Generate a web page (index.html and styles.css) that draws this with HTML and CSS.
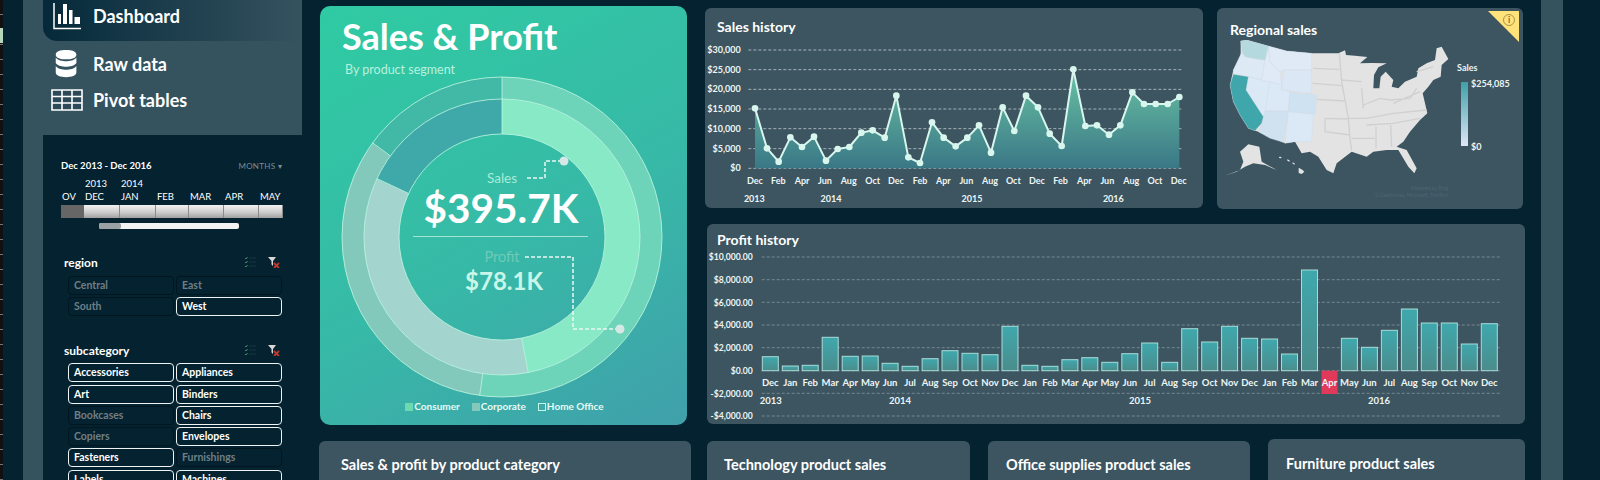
FILE: index.html
```html
<!DOCTYPE html>
<html lang="en">
<head>
  <meta charset="UTF-8" />
  <title>Sales &amp; Profit Dashboard</title>
  <link rel="stylesheet" href="styles.css">
</head>
<body>
  <div class="sheet-edge"><div class="sheet-cell"></div></div>

  <aside class="sidebar">
    <nav class="nav">
      <a class="nav-item active">
        <svg class="nav-icon" viewBox="0 0 36 30"><path class="ico-line" d="M6 2V27.5H33"/><path class="ico-fill" d="M10 13h3v10h-3zM15 3h4v20h-4zM21 9h3.5v14H21zM26.5 16H32v7h-5.5z"/></svg>
        <span>Dashboard</span>
      </a>
      <a class="nav-item">
        <svg class="nav-icon" viewBox="0 0 36 32"><path class="ico-fill" d="M6 6c0-3.5 5-5 11-5s11 1.5 11 5-5 5-11 5-11-1.5-11-5zM6 9c2 3 7 4 11 4s9-1 11-4v6c-2 3-7 4-11 4s-9-1-11-4zM6 18c2 3 7 4 11 4s9-1 11-4v7c0 3-5 5-11 5s-11-2-11-5z"/></svg>
        <span>Raw data</span>
      </a>
      <a class="nav-item">
        <svg class="nav-icon" viewBox="0 0 36 24"><path class="ico-grid" d="M3 2h30v20H3zM3 8.5h30M3 15h30M13 2v20M23 2v20"/></svg>
        <span>Pivot tables</span>
      </a>
    </nav>

    <section class="filters">
      <div class="date-row">
        <span>Dec 2013 - Dec 2016</span>
        <span class="months">MONTHS &#9662;</span>
      </div>
      <div class="tl-row tl-years">
        <span class="s1"></span><span class="s2">2013</span><span class="s3">2014</span>
      </div>
      <div class="tl-row tl-labels">
        <span class="s1 clip">OV</span><span class="s2">DEC</span><span class="s3">JAN</span><span class="s4">FEB</span><span class="s5">MAR</span><span class="s6">APR</span><span class="s7">MAY</span>
      </div>
      <div class="tl-row tl-bar">
        <span class="s1 off"></span><span class="s2"></span><span class="s3"></span><span class="s4"></span><span class="s5"></span><span class="s6"></span><span class="s7"></span>
      </div>
      <div class="tl-scroll"><div class="tl-thumb"></div></div>

      <div class="slicer-head region-head">
        <span>region</span>
        <span class="slicer-tools">
          <svg viewBox="0 0 12 12" class="tool"><path class="tool-check" d="M1 2l1 1 1.5-2M1 6l1 1 1.5-2M1 10l1 1 1.5-2"/><path class="tool-rows" d="M5 2h7M5 6h7M5 10h7"/></svg>
          <svg viewBox="0 0 12 12" class="tool"><path class="tool-funnel" d="M0 1h8L5 5v5L3.5 8.5V5z"/><path class="tool-x" d="M6 7l5 5M11 7l-5 5"/></svg>
        </span>
      </div>
      <div class="slicer">
        <div class="chip">Central</div><div class="chip">East</div>
        <div class="chip">South</div><div class="chip on">West</div>
      </div>

      <div class="slicer-head sub-head">
        <span>subcategory</span>
        <span class="slicer-tools">
          <svg viewBox="0 0 12 12" class="tool"><path class="tool-check" d="M1 2l1 1 1.5-2M1 6l1 1 1.5-2M1 10l1 1 1.5-2"/><path class="tool-rows" d="M5 2h7M5 6h7M5 10h7"/></svg>
          <svg viewBox="0 0 12 12" class="tool"><path class="tool-funnel" d="M0 1h8L5 5v5L3.5 8.5V5z"/><path class="tool-x" d="M6 7l5 5M11 7l-5 5"/></svg>
        </span>
      </div>
      <div class="slicer">
        <div class="chip on">Accessories</div><div class="chip on">Appliances</div>
        <div class="chip on">Art</div><div class="chip on">Binders</div>
        <div class="chip">Bookcases</div><div class="chip on">Chairs</div>
        <div class="chip">Copiers</div><div class="chip on">Envelopes</div>
        <div class="chip on">Fasteners</div><div class="chip">Furnishings</div>
        <div class="chip on">Labels</div><div class="chip on">Machines</div>
      </div>
    </section>
  </aside>

  <main class="main">
    <div class="top">
      <section class="hero">
        <h1>Sales &amp; Profit</h1>
        <p class="hero-sub">By product segment</p>
        <svg class="donut" viewBox="320 76 367 322">
          <circle class="seg" cx="502" cy="237" r="149" stroke="#6dd3b9" stroke-dasharray="188 360" pathLength="360" transform="rotate(-90 502 237)"/>
          <circle class="seg" cx="502" cy="237" r="149" stroke="#83c9bb" stroke-dasharray="118 360" stroke-dashoffset="-188" pathLength="360" transform="rotate(-90 502 237)"/>
          <circle class="seg" cx="502" cy="237" r="149" stroke="#42b8a6" stroke-dasharray="54 360" stroke-dashoffset="-306" pathLength="360" transform="rotate(-90 502 237)"/>
          <circle class="seg wide" cx="502" cy="237" r="120.5" stroke="#87e9c5" stroke-dasharray="169 360" pathLength="360" transform="rotate(-90 502 237)"/>
          <circle class="seg wide" cx="502" cy="237" r="120.5" stroke="#a4d4ce" stroke-dasharray="126 360" stroke-dashoffset="-169" pathLength="360" transform="rotate(-90 502 237)"/>
          <circle class="seg wide" cx="502" cy="237" r="120.5" stroke="#3fa9aa" stroke-dasharray="65 360" stroke-dashoffset="-295" pathLength="360" transform="rotate(-90 502 237)"/>
          <circle class="ring" cx="502" cy="237" r="160"/>
          <circle class="ring" cx="502" cy="237" r="138"/>
          <circle class="ring" cx="502" cy="237" r="103"/>
          <path class="ring" d="M502 77V134M521.7 338.1L528.3 372.5M482.8 373.6L479.7 395.4M408.7 193.5L377 178.6M390.4 155.9L372.6 142.9"/>
          <path class="lead" d="M527 178H545V161H562"/>
          <path class="lead" d="M525 257H573V329H618"/>
          <circle class="dot" cx="564" cy="161" r="4.5"/>
          <circle class="dot" cx="620" cy="329" r="4.5"/>
          <text class="d-sales" x="502" y="183">Sales</text>
          <text class="d-big" x="501" y="223">$395.7K</text>
          <path class="d-rule" d="M413 236.5H588"/>
          <text class="d-profit" x="502" y="262">Profit</text>
          <text class="d-mid" x="504" y="290">$78.1K</text>
        </svg>
        <div class="hero-legend">
          <span><i class="key k1"></i>Consumer</span>
          <span><i class="key k2"></i>Corporate</span>
          <span><i class="key k3"></i>Home Office</span>
        </div>
      </section>

      <div class="right">
        <div class="right-top">
          <section class="card sales-card">
            <h3>Sales history</h3>
            <svg class="chart" viewBox="15 120 1494 504" width="498" height="168">
              <defs>
                <linearGradient id="areaFill" x1="0" y1="0" x2="0" y2="1">
                  <stop offset="0" stop-color="#69c3a4"/>
                  <stop offset="1" stop-color="#3a7786"/>
                </linearGradient>
              </defs>
              <g class="grid-s">
                <path d="M145 150H1450M145 209H1450M145 268H1450M145 327H1450M145 386H1450M145 446H1450M145 505H1450"/>
              </g>
              <path fill="url(#areaFill)" d="M165 325L201 445 236 485 271 412 306 441 342 410 378 482 413 447 448 441 484 398 518 391 554 413 589 287 625 472 660 489 696 367 731 413 767 439 802 413 837 376 873 458 908 322 943 393 978 287 1014 322 1049 401 1085 438 1120 208 1156 378 1191 376 1227 404 1261 376 1297 277 1332 312 1367 312 1403 312 1438 291V505H165Z"/>
              <polyline class="s-line" points="165,325 201,445 236,485 271,412 306,441 342,410 378,482 413,447 448,441 484,398 518,391 554,413 589,287 625,472 660,489 696,367 731,413 767,439 802,413 837,376 873,458 908,322 943,393 978,287 1014,322 1049,401 1085,438 1120,208 1156,378 1191,376 1227,404 1261,376 1297,277 1332,312 1367,312 1403,312 1438,291"/>
              <g class="s-dots">
                <circle cx="165" cy="325" r="10"/><circle cx="201" cy="445" r="10"/><circle cx="236" cy="485" r="10"/><circle cx="271" cy="412" r="10"/><circle cx="306" cy="441" r="10"/><circle cx="342" cy="410" r="10"/><circle cx="378" cy="482" r="10"/><circle cx="413" cy="447" r="10"/><circle cx="448" cy="441" r="10"/><circle cx="484" cy="398" r="10"/><circle cx="518" cy="391" r="10"/><circle cx="554" cy="413" r="10"/><circle cx="589" cy="287" r="10"/><circle cx="625" cy="472" r="10"/><circle cx="660" cy="489" r="10"/><circle cx="696" cy="367" r="10"/><circle cx="731" cy="413" r="10"/><circle cx="767" cy="439" r="10"/><circle cx="802" cy="413" r="10"/><circle cx="837" cy="376" r="10"/><circle cx="873" cy="458" r="10"/><circle cx="908" cy="322" r="10"/><circle cx="943" cy="393" r="10"/><circle cx="978" cy="287" r="10"/><circle cx="1014" cy="322" r="10"/><circle cx="1049" cy="401" r="10"/><circle cx="1085" cy="438" r="10"/><circle cx="1120" cy="208" r="10"/><circle cx="1156" cy="378" r="10"/><circle cx="1191" cy="376" r="10"/><circle cx="1227" cy="404" r="10"/><circle cx="1261" cy="376" r="10"/><circle cx="1297" cy="277" r="10"/><circle cx="1332" cy="312" r="10"/><circle cx="1367" cy="312" r="10"/><circle cx="1403" cy="312" r="10"/><circle cx="1438" cy="291" r="10"/>
              </g>
              <g class="s-text end">
                <text x="122" y="159">$30,000</text><text x="122" y="218">$25,000</text><text x="122" y="277">$20,000</text><text x="122" y="336">$15,000</text><text x="122" y="395">$10,000</text><text x="122" y="455">$5,000</text><text x="122" y="514">$0</text>
              </g>
              <g class="s-text mid">
                <text x="165" y="552">Dec</text><text x="235" y="552">Feb</text><text x="306" y="552">Apr</text><text x="375" y="552">Jun</text><text x="446" y="552">Aug</text><text x="518" y="552">Oct</text><text x="588" y="552">Dec</text><text x="660" y="552">Feb</text><text x="730" y="552">Apr</text><text x="799" y="552">Jun</text><text x="870" y="552">Aug</text><text x="940" y="552">Oct</text><text x="1011" y="552">Dec</text><text x="1082" y="552">Feb</text><text x="1153" y="552">Apr</text><text x="1222" y="552">Jun</text><text x="1294" y="552">Aug</text><text x="1365" y="552">Oct</text><text x="1436" y="552">Dec</text>
                <text x="163" y="607">2013</text><text x="393" y="607">2014</text><text x="816" y="607">2015</text><text x="1240" y="607">2016</text>
              </g>
            </svg>
          </section>

          <section class="card map-card">
            <h3>Regional sales</h3>
            <div class="info-flag"><span>i</span></div>
            <svg class="chart" viewBox="-9 15 918 507" width="306" height="169">
              <defs>
                <linearGradient id="legendFill" x1="0" y1="0" x2="0" y2="1">
                  <stop offset="0" stop-color="#3fa0a8"/>
                  <stop offset="1" stop-color="#dfe6f5"/>
                </linearGradient>
              </defs>
              <path class="land" d="M62 18L80 15 145 33 200 48 275 55 355 55 375 46 378 60 405 62 442 66 420 85 455 84 500 85 475 97 462 120 460 160 478 160 482 125 497 110 520 135 515 155 535 160 555 140 590 125 595 100 620 85 645 75 650 40 665 35 685 72 665 90 662 125 640 135 625 155 608 175 615 205 622 235 600 255 570 290 550 320 530 335 560 345 590 400 583 415 565 395 535 345 500 345 460 350 440 365 395 350 350 385 340 415 320 405 295 365 270 350 245 355 225 320 195 325 115 290 85 280 60 240 40 200 30 150 40 105 62 60Z"/>
              <path class="land" d="M85 328L118 335 125 380 170 405 135 390 100 385 75 395 50 410 15 422 60 405 70 380 60 350Z"/>
              <path class="land" d="M178 365l7 1-2 4-6-1zM203 373l7 4-3 3-6-4zM218 382l7 4-2 3-6-4zM236 398l11 6 6 6-8 7-9-3z"/>
              <path class="st-line" d="M280 100L358 103M278 145L365 152M290 193L375 198M315 250L385 252M358 55L365 140 375 195 385 250 390 310 395 345M315 250V290L390 300M365 135L425 140M425 160L430 220M385 250L440 250 520 235 620 225M440 270L520 265 600 250M468 275V340M512 270L515 335M395 310H465M520 205L600 170M430 210L480 190 510 195 570 190 590 160M590 110L640 95"/>
              <path class="st" fill="#dde9f5" d="M66 50L75 65 110 72 135 75 125 135 85 125 40 118 40 105Z"/>
              <path class="st" fill="#dbe8f6" d="M85 125L150 140 135 235 130 245 78 165Z"/>
              <path class="st" fill="#dfeaf6" d="M145 33L150 80 180 110 185 150 125 135 135 75Z"/>
              <path class="st" fill="#dfeaf6" d="M145 33L200 48 275 55 275 105 190 105 180 110 150 80Z"/>
              <path class="st" fill="#dbe7f5" d="M190 105L275 105 275 175 185 165Z"/>
              <path class="st" fill="#dbe8f6" d="M150 140L185 150 185 165 210 170 205 228 135 228Z"/>
              <path class="st" fill="#cfe2f1" d="M210 172L290 180 285 238 205 230Z"/>
              <path class="st" fill="#d0e1ef" d="M135 228L205 230 190 322 150 310 115 290 127 265 130 245Z"/>
              <path class="st" fill="#dbe8f6" d="M205 230L280 238 275 320 225 320 195 325Z"/>
              <path class="st" fill="#b4d9de" d="M62 18L80 15 145 33 135 75 110 72 75 65 66 50Z"/>
              <path class="st" fill="#3fa7ab" d="M40 118L85 125 78 165 130 245 125 265 105 287 85 280 60 240 40 200 30 150Z"/>
              <text class="s-text" x="711" y="108">Sales</text>
              <rect x="723" y="141" width="21" height="192" fill="url(#legendFill)"/>
              <text class="s-text lg" x="753" y="156">$254,085</text>
              <text class="s-text lg" x="753" y="345">$0</text>
              <text class="attrib" x="684" y="465">Powered by Bing</text>
              <text class="attrib" x="684" y="486">&#169; GeoNames, Microsoft, TomTom</text>
            </svg>
          </section>
        </div>

        <section class="card profit-card">
          <h3>Profit history</h3>
          <svg class="chart" viewBox="707 250 818 174" width="818" height="174">
            <defs>
              <linearGradient id="barFill" x1="0" y1="0" x2="0" y2="1">
                <stop offset="0" stop-color="#3fa8ad"/>
                <stop offset="1" stop-color="#4b8c8c"/>
              </linearGradient>
            </defs>
            <path class="grid-p" d="M761.7 257H1500M761.7 279.7H1500M761.7 302.3H1500M761.7 325H1500M761.7 347.7H1500M761.7 370.7H1500M761.7 393.3H1500M761.7 416H1500"/>
            <g class="bars">
              <rect x="762.3" y="356.7" width="16" height="14"/><rect x="782.3" y="366" width="16" height="4.7"/><rect x="802.2" y="365.3" width="16" height="5.4"/><rect x="822.2" y="337.3" width="16" height="33.4"/><rect x="842.2" y="356.3" width="16" height="14.4"/><rect x="862.2" y="356" width="16" height="14.7"/><rect x="882.1" y="363.3" width="16" height="7.4"/><rect x="902.1" y="366.3" width="16" height="4.4"/><rect x="922.1" y="358.7" width="16" height="12"/><rect x="942" y="350.7" width="16" height="20"/><rect x="962" y="353.3" width="16" height="17.4"/><rect x="982" y="354.7" width="16" height="16"/><rect x="1002" y="326.3" width="16" height="44.4"/><rect x="1021.9" y="365.3" width="16" height="5.4"/><rect x="1041.9" y="366.3" width="16" height="4.4"/><rect x="1061.9" y="359.7" width="16" height="11"/><rect x="1081.8" y="357.7" width="16" height="13"/><rect x="1101.8" y="362.3" width="16" height="8.4"/><rect x="1121.8" y="353.7" width="16" height="17"/><rect x="1141.7" y="343" width="16" height="27.7"/><rect x="1161.7" y="362.3" width="16" height="8.4"/><rect x="1181.7" y="328.7" width="16" height="42"/><rect x="1201.7" y="342" width="16" height="28.7"/><rect x="1221.6" y="326.3" width="16" height="44.4"/><rect x="1241.6" y="338.3" width="16" height="32.4"/><rect x="1261.6" y="339" width="16" height="31.7"/><rect x="1281.5" y="354" width="16" height="16.7"/><rect x="1301.5" y="270" width="16" height="100.7"/><rect x="1341.4" y="338.3" width="16" height="32.4"/><rect x="1361.4" y="347.3" width="16" height="23.4"/><rect x="1381.4" y="330.3" width="16" height="40.4"/><rect x="1401.4" y="309" width="16" height="61.7"/><rect x="1421.3" y="323" width="16" height="47.7"/><rect x="1441.3" y="323" width="16" height="47.7"/><rect x="1461.3" y="344" width="16" height="26.7"/><rect x="1481.3" y="323.7" width="16" height="47"/>
            </g>
            <rect class="neg" x="1321.5" y="370.7" width="16" height="23.3"/>
            <g class="p-text end yaxis">
              <text x="752.7" y="260">$10,000.00</text><text x="752.7" y="283">$8,000.00</text><text x="752.7" y="305.5">$6,000.00</text><text x="752.7" y="328">$4,000.00</text><text x="752.7" y="351">$2,000.00</text><text x="752.7" y="374">$0.00</text><text x="752.7" y="396.5">-$2,000.00</text><text x="752.7" y="419">-$4,000.00</text>
            </g>
            <g class="p-text mid">
              <text x="770.3" y="386">Dec</text><text x="790.3" y="386">Jan</text><text x="810.2" y="386">Feb</text><text x="830.2" y="386">Mar</text><text x="850.2" y="386">Apr</text><text x="870.2" y="386">May</text><text x="890.1" y="386">Jun</text><text x="910.1" y="386">Jul</text><text x="930.1" y="386">Aug</text><text x="950" y="386">Sep</text><text x="970" y="386">Oct</text><text x="990" y="386">Nov</text><text x="1010" y="386">Dec</text><text x="1029.9" y="386">Jan</text><text x="1049.9" y="386">Feb</text><text x="1069.9" y="386">Mar</text><text x="1089.8" y="386">Apr</text><text x="1109.8" y="386">May</text><text x="1129.8" y="386">Jun</text><text x="1149.7" y="386">Jul</text><text x="1169.7" y="386">Aug</text><text x="1189.7" y="386">Sep</text><text x="1209.7" y="386">Oct</text><text x="1229.6" y="386">Nov</text><text x="1249.6" y="386">Dec</text><text x="1269.6" y="386">Jan</text><text x="1289.5" y="386">Feb</text><text x="1309.5" y="386">Mar</text><text x="1329.5" y="386">Apr</text><text x="1349.4" y="386">May</text><text x="1369.4" y="386">Jun</text><text x="1389.4" y="386">Jul</text><text x="1409.4" y="386">Aug</text><text x="1429.3" y="386">Sep</text><text x="1449.3" y="386">Oct</text><text x="1469.3" y="386">Nov</text><text x="1489.3" y="386">Dec</text>
              <text x="770.7" y="404">2013</text><text x="900" y="404">2014</text><text x="1140" y="404">2015</text><text x="1379" y="404">2016</text>
            </g>
          </svg>
        </section>
      </div>
    </div>

    <div class="bottom">
      <section class="card b-category"><h3>Sales &amp; profit by product category</h3></section>
      <section class="card b-tech"><h3>Technology product sales</h3></section>
      <section class="card b-office"><h3>Office supplies product sales</h3></section>
      <section class="card b-furn"><h3>Furniture product sales</h3></section>
    </div>
  </main>

  <div class="side-strip"></div>
</body>
</html>
```

FILE: styles.css
```css
* {
  box-sizing: border-box;
}
html, body {
  height: 480px;
  overflow: hidden;
}
body {
  margin: 0;
  width: 1600px;
  display: flex;
  background: #04222f;
  color: white;
  font-family: "Lato", "Noto Sans", sans-serif;
}

/* spreadsheet sliver on the far left */
.sheet-edge {
  width: 3px;
  flex: none;
  background: repeating-linear-gradient(#111 0, #111 14px, #777 14px, #777 15px);
}
.sheet-cell {
  height: 15px;
  margin-top: 28px;
  background: #b5d6bb;
}

.sidebar {
  width: 279px;
  flex: none;
  margin-left: 20px;
  background: linear-gradient(#35525f 0, #35525f 135px, transparent 135px), linear-gradient(90deg, #35525f 20px, transparent 20px);
}
.nav {
  height: 135px;
}
.nav-item {
  display: flex;
  align-items: center;
  gap: 8px;
  height: 36px;
  padding-left: 26px;
  font-size: 18px;
  font-weight: 700;
}
.nav-item.active {
  height: 41px;
  margin-left: 20px;
  margin-bottom: 5px;
  padding-left: 5px;
  gap: 9px;
  padding-bottom: 10px;
  border-bottom-left-radius: 14px;
  background: linear-gradient(90deg, #05293a 0, #1b3c4b 45%, #35525f 100%);
}
.nav-icon {
  width: 36px;
  height: 30px;
  flex: none;
}
.ico-line {
  fill: none;
  stroke: white;
  stroke-width: 1.5;
}
.ico-fill {
  fill: white;
}
.ico-grid {
  fill: #2b4956;
  stroke: white;
  stroke-width: 1.6;
}

.filters {
  height: 345px;
  margin-left: 20px;
  padding: 24px 20px 0 18px;
  background: #04222f;
  border-top-left-radius: 8px;
  overflow: hidden;
  font-size: 9.5px;
  font-weight: 700;
}
.date-row {
  display: flex;
  justify-content: space-between;
  height: 16px;
  line-height: 14px;
}
.months {
  font-weight: 400;
  font-size: 8px;
  color: #7f8d93;
  letter-spacing: .3px;
}
.tl-row {
  display: flex;
}
.tl-row span {
  flex: none;
  padding-left: 1px;
}
.s1 { width: 23px; }
.s2 { width: 36px; }
.s3 { width: 36px; }
.s4 { width: 33px; }
.s5 { width: 35px; }
.s6 { width: 35px; }
.s7 { width: 24px; }
.tl-years {
  height: 16px;
  line-height: 17px;
  font-weight: 400;
}
.tl-labels {
  height: 14px;
  line-height: 12px;
  font-weight: 400;
}
.tl-bar {
  height: 13px;
}
.tl-bar span {
  border-right: 1px solid #8a8a8a;
  background: linear-gradient(#f2f2f2, #c9c9c9 60%, #a0a0a0);
}
.tl-bar .off {
  background: #666;
  border: 0;
}
.tl-scroll {
  width: 140px;
  height: 6px;
  margin: 5px 0 0 38px;
  background: #f3f3f3;
  border-radius: 2px;
}
.tl-thumb {
  width: 22px;
  height: 6px;
  background: #9aa0a3;
  border-radius: 2px;
}

.slicer-head {
  display: flex;
  justify-content: space-between;
  align-items: center;
  height: 18px;
  padding: 0 2px 0 3px;
  font-size: 12px;
}
.region-head {
  margin-top: 24px;
  margin-bottom: 5px;
}
.sub-head {
  margin-top: 25px;
  margin-bottom: 4px;
}
.slicer-tools {
  display: flex;
  gap: 12px;
}
.tool {
  width: 12px;
  height: 12px;
}
.tool-check {
  fill: none;
  stroke: #3e8f62;
  stroke-width: 1;
}
.tool-rows {
  fill: none;
  stroke: #12313d;
  stroke-width: 1.5;
}
.tool-funnel {
  fill: #d8d8d8;
}
.tool-x {
  fill: none;
  stroke: #c0392b;
  stroke-width: 1.8;
}
.slicer {
  display: grid;
  grid-template-columns: 106px 106px;
  gap: 2.3px 2px;
  margin-left: 7px;
}
.chip {
  height: 19px;
  padding-left: 5px;
  line-height: 16px;
  font-size: 10.5px;
  color: #6f7f86;
  border: 1.5px solid #02161f;
  border-radius: 4px;
}
.chip.on {
  color: white;
  border-color: #eef3f4;
}

.main {
  width: 1239px;
  flex: none;
}
.top {
  display: flex;
  padding-left: 18px;
}
.hero {
  width: 367px;
  height: 419px;
  margin-top: 6px;
  border-radius: 10px;
  background: linear-gradient(150deg, #2fcba3 0, #37b9a7 55%, #40a0ab 100%);
}
.hero h1 {
  margin: 0;
  padding: 11px 0 0 22px;
  height: 48px;
  font-size: 36px;
  line-height: 38px;
  font-weight: 700;
}
.hero-sub {
  margin: 0;
  height: 22px;
  padding: 9px 0 0 25px;
  font-size: 12.5px;
  line-height: 14px;
  color: #b8f1dd;
}
.donut {
  display: block;
  width: 367px;
  height: 322px;
}
.seg {
  fill: none;
  stroke-width: 22;
}
.seg.wide {
  stroke-width: 35;
}
.ring {
  fill: none;
  stroke: #c2f7e3;
  stroke-opacity: .8;
  stroke-width: 1;
}
.lead {
  fill: none;
  stroke: #e9f8f3;
  stroke-width: 1.5;
  stroke-dasharray: 4 2;
}
.dot {
  fill: #d5e8e5;
}
.donut text {
  text-anchor: middle;
}
.d-sales {
  font-size: 13.5px;
  fill: #a9ecd7;
}
.d-big {
  font-size: 40.5px;
  font-weight: 700;
  fill: white;
}
.d-rule {
  stroke: #a7e3d3;
  stroke-width: 1;
}
.d-profit {
  font-size: 14.5px;
  fill: #6ecab9;
}
.d-mid {
  font-size: 24px;
  font-weight: 700;
  fill: #c9f6e8;
}
.hero-legend {
  display: flex;
  justify-content: center;
  gap: 12px;
  margin-top: 2px;
  padding-left: 2px;
  font-size: 10px;
  font-weight: 700;
  color: #e6fbf4;
}
.key {
  display: inline-block;
  width: 8px;
  height: 8px;
  margin-right: 1px;
  vertical-align: -1px;
}
.k1 { background: #6cd9b0; }
.k2 { background: #83c9bb; }
.k3 { border: 1px solid #c2f7e3; }

.right {
  margin-left: 18px;
  padding-top: 8px;
}
.right-top {
  display: flex;
  gap: 14px;
  height: 201px;
}
.card {
  position: relative;
  background: #3c5561;
  border-radius: 6px;
}
.card h3 {
  margin: 0;
  font-size: 14px;
  font-weight: 700;
  line-height: 18px;
}
.chart {
  display: block;
}
.sales-card {
  width: 498px;
  height: 200px;
}
.sales-card h3 {
  height: 32px;
  padding: 10px 0 0 12px;
}
.map-card {
  width: 306px;
  height: 201px;
}
.map-card h3 {
  height: 32px;
  padding: 13px 0 0 13px;
}
.info-flag {
  position: absolute;
  top: 3px;
  right: 4px;
  width: 31px;
  height: 31px;
  background: #ffe27a;
  clip-path: polygon(0 0, 100% 0, 100% 100%);
}
.info-flag span {
  position: absolute;
  top: 3px;
  right: 4px;
  width: 12px;
  height: 12px;
  border: 1px solid #a89545;
  border-radius: 50%;
  font-size: 9px;
  line-height: 10px;
  text-align: center;
  color: #444;
}
.profit-card {
  width: 818px;
  height: 200px;
  margin: 15px 0 0 2px;
}
.profit-card h3 {
  height: 26px;
  padding: 7px 0 0 10px;
}

.grid-s path {
  fill: none;
  stroke: rgba(255, 255, 255, .55);
  stroke-width: 3;
  stroke-dasharray: 9 6;
}
.s-line {
  fill: none;
  stroke: #d9f6ee;
  stroke-width: 6;
  stroke-linejoin: round;
}
.s-dots circle {
  fill: #d9f6ee;
}
.s-text text, text.s-text {
  font-size: 27px;
  font-weight: 700;
  fill: #eef5f5;
}
.end text { text-anchor: end; }
.mid text { text-anchor: middle; }

.land { fill: #e3e3e3; }
.st-line {
  fill: none;
  stroke: #d0d0d0;
  stroke-width: 4;
}
.st {
  stroke: #cbd9e4;
  stroke-width: 1;
}
.attrib {
  font-size: 15px;
  fill: #4d6570;
  text-anchor: end;
}

.grid-p {
  fill: none;
  stroke: rgba(255, 255, 255, .3);
  stroke-width: 1;
  stroke-dasharray: 3 2;
}
.bars rect {
  fill: url(#barFill);
  stroke: #a9dcd8;
  stroke-width: 1;
}
.neg {
  fill: #e0395a;
}
.p-text text {
  font-size: 9.5px;
  font-weight: 700;
  fill: #eef5f5;
}
.p-text.yaxis text {
  font-size: 8.6px;
}

.bottom {
  position: relative;
  display: flex;
  align-items: flex-start;
  margin-top: 16px;
  padding-left: 17px;
}
.bottom .card {
  height: 60px;
  padding-top: 15px;
}
.bottom h3 {
  font-size: 14.5px;
}
.b-category {
  width: 372px;
  padding-left: 22px;
}
.b-tech {
  width: 263px;
  margin-left: 16px;
  padding-left: 17px;
}
.b-office {
  width: 262px;
  margin-left: 18px;
  padding-left: 18px;
}
.b-furn {
  width: 257px;
  margin: -2px 0 0 18px;
  padding-left: 18px;
}
.bottom .b-furn {
  padding-top: 16px;
}

.side-strip {
  width: 22px;
  flex: none;
  background: #35525f;
}
```
